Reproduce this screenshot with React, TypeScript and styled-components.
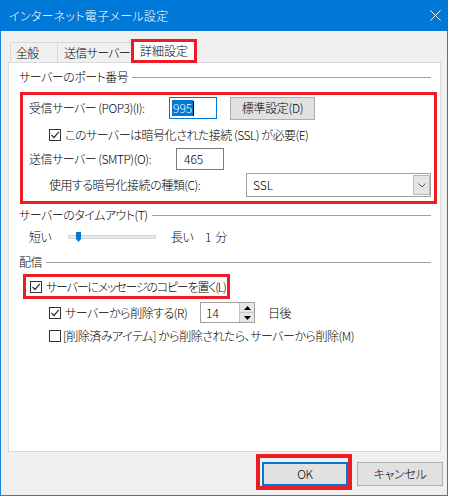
import React from 'react';
import styled, { createGlobalStyle } from 'styled-components';

const RED = '#ed1c24';
const BLUE = '#0078d7';

const GlobalStyle = createGlobalStyle`
  html, body { margin: 0; padding: 0; background: #ffffff; }
  body {
    font-family: "Noto Sans CJK JP", "Noto Sans", sans-serif;
    font-size: 12px;
    font-weight: 300;
    line-height: 16px;
    color: #000;
    font-feature-settings: "palt";
  }
  * { box-sizing: border-box; }
`;

const Window = styled.div`
  width: 448px;
  height: 496px;
  border: 1px solid #1883d7;
  border-top: none;
  background: #f0f0f0;
  display: flex;
  flex-direction: column;
`;

const TitleBar = styled.div`
  height: 31px;
  flex-shrink: 0;
  background: ${BLUE};
  color: #fff;
  display: flex;
  align-items: center;
  justify-content: space-between;
  margin: 0 -1px;
  padding: 0 7px 0 9px;
`;

const Title = styled.span`
  font-size: 12px;
  padding-top: 1px;
  letter-spacing: 0.3px;
`;

const Body = styled.div`
  flex: 1;
  display: flex;
  flex-direction: column;
  padding: 8px 6px 0 7px;
  letter-spacing: -0.5px;
`;

const TabBar = styled.div`
  height: 23px;
  display: flex;
  align-items: flex-end;
  padding-left: 2px;
`;

const Tab = styled.div<{ $w: number; $pad: number }>`
  width: ${(p) => p.$w}px;
  height: 20px;
  margin-right: -1px;
  padding-left: ${(p) => p.$pad}px;
  border: 1px solid #d9d9d9;
  border-bottom: none;
  background: #f0f0f0;
  display: flex;
  align-items: center;
  white-space: nowrap;
  letter-spacing: -0.7px;
`;

const ActiveTab = styled.div`
  position: relative;
  z-index: 1;
  width: 66px;
  height: 24px;
  margin-bottom: -1px;
  border: 3px solid ${RED};
  background: #fff;
  display: flex;
  align-items: center;
  justify-content: center;
  white-space: nowrap;
  letter-spacing: 0;
`;

const Panel = styled.div`
  height: 390px;
  flex-shrink: 0;
  background: #fff;
  border: 1px solid #d9d9d9;
  padding: 6px 3px 0 10px;
  display: flex;
  flex-direction: column;
`;

const Heading = styled.div<{ $top?: number }>`
  height: 16px;
  margin-top: ${(p) => p.$top ?? 0}px;
  margin-right: 6px;
  display: flex;
  align-items: center;
  gap: 4px;
  white-space: nowrap;
`;

const Rule = styled.div`
  flex: 1;
  height: 1px;
  background: #a0a0a0;
`;

const Marked = styled.div<{ $top: number; $left: number; $w?: number }>`
  margin-top: ${(p) => p.$top}px;
  margin-left: ${(p) => p.$left}px;
  width: ${(p) => (p.$w ? `${p.$w}px` : 'auto')};
  border: 3px solid ${RED};
  display: flex;
  flex-direction: column;
`;

const PortBox = styled(Marked)`
  padding: 2px 0 4px 6px;
`;

const CopyBox = styled(Marked)`
  height: 25px;
  padding-left: 4px;
  justify-content: center;
  letter-spacing: -1.2px;
`;

const Row = styled.div<{ $top?: number; $indent?: number; $h?: number }>`
  display: flex;
  align-items: center;
  height: ${(p) => p.$h ?? 16}px;
  margin-top: ${(p) => p.$top ?? 0}px;
  padding-left: ${(p) => p.$indent ?? 0}px;
  white-space: nowrap;
`;

const FieldLabel = styled.span<{ $w: number; $left?: number }>`
  width: ${(p) => p.$w}px;
  margin-left: ${(p) => p.$left ?? 0}px;
  flex-shrink: 0;
  white-space: nowrap;
`;

const TextBox = styled.div<{ $w: number; $focused?: boolean }>`
  width: ${(p) => p.$w}px;
  height: 22px;
  flex-shrink: 0;
  background: #fff;
  border: 1px solid ${(p) => (p.$focused ? BLUE : '#7a7a7a')};
  padding-left: 2px;
  display: flex;
  align-items: center;
  letter-spacing: 0;
`;

const Selection = styled.span`
  background: ${BLUE};
  color: #fff;
  padding: 0 1px;
  line-height: 16px;
`;

const Caret = styled.span`
  width: 1px;
  height: 15px;
  background: #000;
`;

const PushButton = styled.button<{ $w: number; $h: number; $left?: number; $default?: boolean }>`
  width: ${(p) => p.$w}px;
  height: ${(p) => p.$h}px;
  margin-left: ${(p) => p.$left ?? 0}px;
  flex-shrink: 0;
  padding: 0;
  font: inherit;
  font-feature-settings: "palt";
  letter-spacing: -0.3px;
  color: #000;
  background: #e1e1e1;
  border: ${(p) => (p.$default ? `2px solid ${BLUE}` : '1px solid #adadad')};
  display: flex;
  align-items: center;
  justify-content: center;
`;

const CheckBox = styled.span<{ $gap?: number }>`
  width: 12px;
  height: 12px;
  flex-shrink: 0;
  margin-right: ${(p) => p.$gap ?? 4}px;
  border: 1px solid #333;
  background: #fff;
  display: flex;
  align-items: center;
  justify-content: center;
`;

const Check = ({ on, gap }: { on?: boolean; gap?: number }) => (
  <CheckBox $gap={gap}>
    {on && (
      <svg width="10" height="10" viewBox="0 0 10 10">
        <path d="M1.5 5 L4 7.5 L8.8 1.8" fill="none" stroke="#333" strokeWidth="1.2" />
      </svg>
    )}
  </CheckBox>
);

const ComboBox = styled.div`
  width: 185px;
  height: 24px;
  flex-shrink: 0;
  background: #fff;
  border: 1px solid #a0a0a0;
  display: flex;
  align-items: stretch;
  letter-spacing: 0;
`;

const ComboText = styled.span`
  flex: 1;
  padding-left: 6px;
  display: flex;
  align-items: center;
`;

const DropButton = styled.span`
  width: 17px;
  margin: 1px 0;
  background: #e5e5e5;
  border: 1px solid #b9b9b9;
  display: flex;
  align-items: center;
  justify-content: center;
`;

const Track = styled.div`
  position: relative;
  width: 88px;
  height: 4px;
  flex-shrink: 0;
  background: #e7eaea;
  border: 1px solid #d6d6d6;
  margin-right: 15px;
`;

const Thumb = styled.svg`
  position: absolute;
  left: 7px;
  top: -4px;
`;

const SpinBox = styled.div`
  width: 55px;
  height: 21px;
  flex-shrink: 0;
  background: #fff;
  border: 1px solid #a0a0a0;
  display: flex;
  letter-spacing: 0;
`;

const SpinText = styled.span`
  flex: 1;
  padding-left: 5px;
  display: flex;
  align-items: center;
`;

const SpinButtons = styled.div`
  width: 15px;
  display: flex;
  flex-direction: column;
  border-left: 1px solid #c4c4c4;
`;

const SpinHalf = styled.span`
  flex: 1;
  background: #e6e6e6;
  display: flex;
  align-items: center;
  justify-content: center;
  & + & { border-top: 1px solid #c4c4c4; }
`;

const Footer = styled.div`
  display: flex;
  justify-content: flex-end;
  align-items: flex-start;
  gap: 5px;
  margin-top: 2px;
  margin-right: -2px;
`;

const OkFrame = styled.div`
  border: 4px solid ${RED};
  padding: 4px 0 0 2px;
`;

const CancelButton = styled(PushButton)`
  margin-top: 8px;
`;

export default function App() {
  return (
    <>
      <GlobalStyle />
      <Window>
        <TitleBar>
          <Title>インターネット電子メール設定</Title>
          <svg width="11" height="11" viewBox="0 0 11 11">
            <path d="M0.5 0.5 L10.5 10.5 M10.5 0.5 L0.5 10.5" stroke="#fff" strokeWidth="1" />
          </svg>
        </TitleBar>
        <Body>
          <TabBar>
            <Tab $w={48} $pad={5}>全般</Tab>
            <Tab $w={75} $pad={6}>送信サーバー</Tab>
            <ActiveTab>詳細設定</ActiveTab>
          </TabBar>
          <Panel>
            <Heading>
              サーバーのポート番号
              <Rule />
            </Heading>
            <PortBox $top={7} $left={1}>
              <Row $h={22}>
                <FieldLabel $w={140}>受信サーバー (POP3)(I):</FieldLabel>
                <TextBox $w={48} $focused>
                  <Selection>995</Selection>
                  <Caret />
                </TextBox>
                <PushButton $w={85} $h={23} $left={13}>標準設定(D)</PushButton>
              </Row>
              <Row $top={8} $indent={20}>
                <Check on />
                このサーバーは暗号化された接続 (SSL) が必要(E)
              </Row>
              <Row $top={5} $h={22}>
                <FieldLabel $w={147}>送信サーバー (SMTP)(O):</FieldLabel>
                <TextBox $w={48}>
                  <SpinText>465</SpinText>
                </TextBox>
              </Row>
              <Row $top={3} $h={24} $indent={20}>
                <FieldLabel $w={197}>使用する暗号化接続の種類(C):</FieldLabel>
                <ComboBox>
                  <ComboText>SSL</ComboText>
                  <DropButton>
                    <svg width="8" height="5" viewBox="0 0 8 5">
                      <path d="M0.5 0.5 L4 4 L7.5 0.5" fill="none" stroke="#555" strokeWidth="1" />
                    </svg>
                  </DropButton>
                </ComboBox>
              </Row>
            </PortBox>
            <Heading $top={3}>
              サーバーのタイムアウト(T)
              <Rule />
            </Heading>
            <Row $top={6} $indent={10}>
              <FieldLabel $w={39}>短い</FieldLabel>
              <Track>
                <Thumb width="5" height="10" viewBox="0 0 5 10">
                  <path d="M0 0 H5 V7 L2.5 10 L0 7 Z" fill={BLUE} />
                </Thumb>
              </Track>
              <FieldLabel $w={34}>長い</FieldLabel>
              1&nbsp;&nbsp;分
            </Row>
            <Heading $top={9}>
              配信
              <Rule />
            </Heading>
            <CopyBox $top={4} $left={4} $w={207}>
              <Row>
                <Check on />
                サーバーにメッセージのコピーを置く(L)
              </Row>
            </CopyBox>
            <Row $top={3} $h={21} $indent={30}>
              <Check on />
              <FieldLabel $w={135}>サーバーから削除する(R)</FieldLabel>
              <SpinBox>
                <SpinText>14</SpinText>
                <SpinButtons>
                  <SpinHalf>
                    <svg width="7" height="4" viewBox="0 0 7 4"><path d="M0 4 L3.5 0 L7 4 Z" fill="#000" /></svg>
                  </SpinHalf>
                  <SpinHalf>
                    <svg width="7" height="4" viewBox="0 0 7 4"><path d="M0 0 L3.5 4 L7 0 Z" fill="#000" /></svg>
                  </SpinHalf>
                </SpinButtons>
              </SpinBox>
              <FieldLabel $w={40} $left={13}>日後</FieldLabel>
            </Row>
            <Row $top={5} $indent={30}>
              <Check gap={2} />
              [削除済みアイテム] から削除されたら、サーバーから削除(M)
            </Row>
          </Panel>
          <Footer>
            <OkFrame>
              <PushButton $w={86} $h={24} $default>OK</PushButton>
            </OkFrame>
            <CancelButton $w={86} $h={24}>キャンセル</CancelButton>
          </Footer>
        </Body>
      </Window>
    </>
  );
}
